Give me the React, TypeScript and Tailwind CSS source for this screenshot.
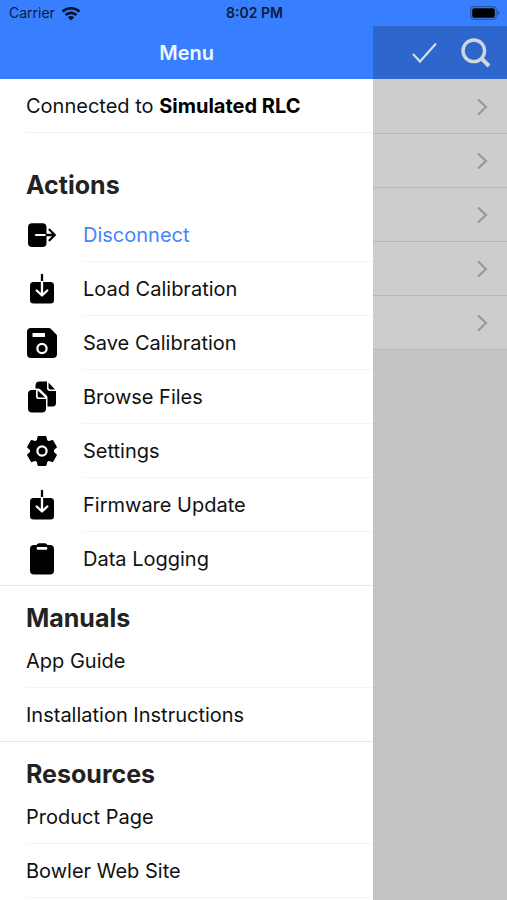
import React from "react";

type IconProps = { children: React.ReactNode };

function Icon({ children }: IconProps) {
  return (
    <svg viewBox="0 0 32 32" className="h-8 w-8 shrink-0" fill="#000" aria-hidden="true">
      {children}
    </svg>
  );
}

function ExitIcon() {
  return (
    <Icon>
      <rect x="2" y="4.300" width="18.500" height="23.700" rx="4" />
      <path d="M10 16H20.500" stroke="#fff" strokeWidth="2.200" strokeLinecap="round" />
      <path d="M20.500 16H28.500M23.500 10.800L28.800 16L23.500 21.200" fill="none" stroke="#000" strokeWidth="2.300" strokeLinecap="round" strokeLinejoin="round" />
    </Icon>
  );
}

function DownloadIcon() {
  return (
    <Icon>
      <rect x="4" y="9" width="24" height="21.500" rx="3.500" />
      <path d="M16 2V9" stroke="#000" strokeWidth="2.300" strokeLinecap="round" />
      <path d="M16 9V22M10.700 17.500L16 22.500L21.300 17.500" fill="none" stroke="#fff" strokeWidth="2.300" strokeLinecap="round" strokeLinejoin="round" />
    </Icon>
  );
}

function SaveIcon() {
  return (
    <Icon>
      <path d="M5 1H23Q24 1 24.800 1.800L30.200 7.200Q31 8 31 9V27A4 4 0 0 1 27 31H5A4 4 0 0 1 1 27V5A4 4 0 0 1 5 1Z" />
      <rect x="6.500" y="6" width="12.500" height="4" rx="0.500" fill="#fff" />
      <circle cx="16" cy="21.500" r="4.600" fill="none" stroke="#fff" strokeWidth="2.200" />
    </Icon>
  );
}

function FilesIcon() {
  return (
    <Icon>
      <path d="M13.500 0.500H21V7A3 3 0 0 0 24 10H30V22A3.500 3.500 0 0 1 26.500 25.500H21.500V16.500Q21.500 15.500 20.800 14.800L14.500 8.500Q13.500 7.500 12 7.500H9.500V4.500A4 4 0 0 1 13.500 0.500Z" />
      <path d="M22.500 1.500L29 8.500H24.500A2 2 0 0 1 22.500 6.500Z" />
      <path d="M6 9H10V15.500A2.500 2.500 0 0 0 12.500 18H20V27.500A4 4 0 0 1 16 31.500H6A4 4 0 0 1 2 27.500V13A4 4 0 0 1 6 9Z" />
      <path d="M11.700 9.500L19.200 16.500H13.200A1.500 1.500 0 0 1 11.700 15Z" />
    </Icon>
  );
}

function GearIcon() {
  return (
    <Icon>
      <circle cx="16" cy="16" r="12" />
      <g strokeLinejoin="round" stroke="#000" strokeWidth="2">
        <path d="M12.500 2H19.500L21 9V23L19.500 30H12.500L11 23V9Z" />
        <path d="M12.500 2H19.500L21 9V23L19.500 30H12.500L11 23V9Z" transform="rotate(60 16 16)" />
        <path d="M12.500 2H19.500L21 9V23L19.500 30H12.500L11 23V9Z" transform="rotate(120 16 16)" />
      </g>
      <circle cx="16" cy="16" r="4.600" fill="none" stroke="#fff" strokeWidth="2.200" />
    </Icon>
  );
}

function ClipboardIcon() {
  return (
    <Icon>
      <path d="M8 2H10.500Q11.500 0.200 13 0.200H19Q20.500 0.200 21.500 2H24A4 4 0 0 1 28 6V27.500A4 4 0 0 1 24 31.500H8A4 4 0 0 1 4 27.500V6A4 4 0 0 1 8 2Z" />
      <rect x="10.700" y="4" width="10.600" height="2.800" rx="1" fill="#fff" />
    </Icon>
  );
}

const actions = [
  { label: "Disconnect", icon: <ExitIcon />, tone: "text-[#4286fd]" },
  { label: "Load Calibration", icon: <DownloadIcon />, tone: "text-[#111]" },
  { label: "Save Calibration", icon: <SaveIcon />, tone: "text-[#111]" },
  { label: "Browse Files", icon: <FilesIcon />, tone: "text-[#111]" },
  { label: "Settings", icon: <GearIcon />, tone: "text-[#111]" },
  { label: "Firmware Update", icon: <DownloadIcon />, tone: "text-[#111]" },
  { label: "Data Logging", icon: <ClipboardIcon />, tone: "text-[#111]" },
];

function LinkSection({ title, links }: { title: string; links: string[] }) {
  return (
    <section className="border-t border-[#e6e6e6]">
      <h2 className="flex h-12 items-end px-[26px] text-[25px] leading-8 font-bold text-[#222]">{title}</h2>
      <ul className="pl-[26px]">
        {links.map((link) => (
          <li key={link} className="border-b border-[#f4f4f4] last:border-b-0">
            <a href="#" className="flex h-[53px] items-center text-xl text-[#111]">
              {link}
            </a>
          </li>
        ))}
      </ul>
    </section>
  );
}

export default function App() {
  return (
    <div className="flex h-screen flex-col overflow-hidden bg-white font-['Inter','Liberation_Sans',sans-serif]">
      <div className="grid h-[26px] shrink-0 grid-cols-3 items-center bg-[#387fff] pr-[7px] pl-[9px] text-sm text-[#0a1c3c]">
        <div className="flex items-center gap-1.5">
          <span>Carrier</span>
          <svg viewBox="0 0 20 15" className="h-[15px] w-5" aria-label="Wi-Fi" fill="none" stroke="#06142c" strokeWidth="2.600">
            <path d="M1.500 5.600A12.500 12.500 0 0 1 18.500 5.600" />
            <path d="M4.600 9A7.800 7.800 0 0 1 15.400 9" />
            <path d="M10 14.500L6.800 11.300A4.600 4.600 0 0 1 13.200 11.300Z" fill="#06142c" stroke="none" />
          </svg>
        </div>
        <span className="text-center font-semibold">8:02 PM</span>
        <svg viewBox="0 0 30 14" className="h-3.5 w-[30px] justify-self-end" aria-label="Battery">
          <rect x="0.700" y="0.700" width="25.600" height="12.600" rx="3.500" fill="none" stroke="#2457ad" strokeWidth="1.200" />
          <rect x="2.200" y="2.200" width="22.600" height="9.600" rx="2" fill="#000" />
          <path d="M27.500 4.500Q29.500 5.200 29.500 7T27.500 9.500Z" fill="#2457ad" />
        </svg>
      </div>

      <div className="flex min-h-0 flex-1">
        <aside className="flex w-[73.6%] flex-col overflow-hidden bg-white">
          <header className="flex h-[53px] shrink-0 items-center justify-center bg-[#387fff]">
            <h1 className="text-xl font-semibold text-[#f3f7ff]">Menu</h1>
          </header>
          <p className="ml-[26px] flex h-[54px] shrink-0 items-center border-b border-[#f2f2f2] text-xl text-[#111]">
            <span>
              Connected to <strong className="font-bold text-black">Simulated RLC</strong>
            </span>
          </p>
          <section className="pt-9">
            <h2 className="px-[26px] text-[25px] leading-8 font-bold text-[#222]">Actions</h2>
            <ul className="pt-[7px]">
              {actions.map(({ label, icon, tone }) => (
                <li key={label} className="group">
                  <button type="button" className="flex w-full items-center gap-[25px] pl-[26px] text-left text-xl">
                    {icon}
                    <span className={`flex h-[54px] flex-1 items-center border-b border-[#f4f4f4] group-last:h-[53px] group-last:border-b-0 ${tone}`}>
                      {label}
                    </span>
                  </button>
                </li>
              ))}
            </ul>
          </section>
          <LinkSection title="Manuals" links={["App Guide", "Installation Instructions"]} />
          <LinkSection title="Resources" links={["Product Page", "Bowler Web Site"]} />
          <div className="ml-[26px] border-t border-[#f4f4f4]" />
        </aside>

        <main className="min-w-0 flex-1 bg-[#c3c3c3]">
          <div className="flex h-[53px] items-center justify-end gap-6 bg-[#2d66cc] pr-4">
            <button type="button" aria-label="Confirm">
              <svg viewBox="0 0 26 22" className="h-[22px] w-[26px]" fill="none" stroke="#d2dcec" strokeWidth="2.200">
                <path d="M2 12L9 19.500L25 1.500" />
              </svg>
            </button>
            <button type="button" aria-label="Search">
              <svg viewBox="0 0 30 30" className="h-[30px] w-[30px]" fill="none" stroke="#d0d6e0" strokeWidth="3.400">
                <circle cx="12.800" cy="12.800" r="10.800" />
                <path d="M20.500 20.500L28 28" strokeWidth="4" />
              </svg>
            </button>
          </div>
          <ul className="border-t border-[#cdcdcd]">
            {[1, 2, 3, 4, 5].map((row) => (
              <li key={row} className="border-b border-[#b7b7b7] bg-[#cdcdcd]">
                <button type="button" aria-label={`Open item ${row}`} className="flex h-[53px] w-full items-center justify-end pr-[19px]">
                  <svg viewBox="0 0 12 18" className="h-[18px] w-3" fill="none" stroke="#989898" strokeWidth="2.200">
                    <path d="M2 1.500L10 9L2 16.500" />
                  </svg>
                </button>
              </li>
            ))}
          </ul>
        </main>
      </div>
    </div>
  );
}
